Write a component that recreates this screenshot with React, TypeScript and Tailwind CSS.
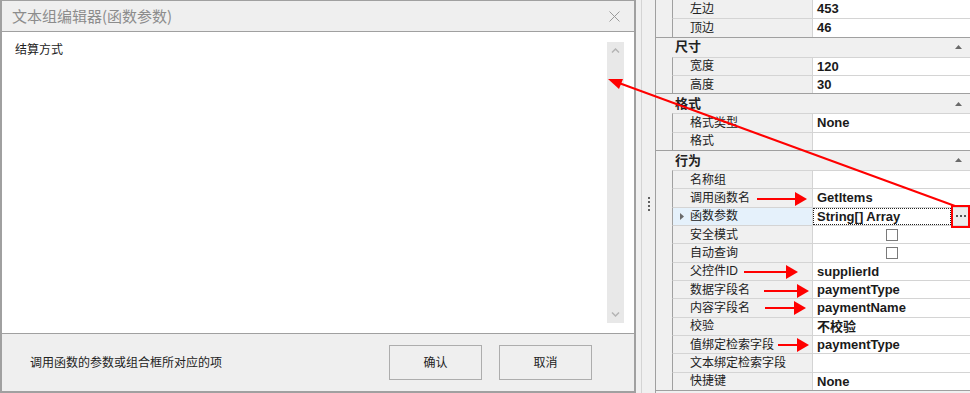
import React from "react";

type Item =
	| { kind: "cat"; name: string }
	| { kind: "row"; name: string; value?: string; check?: boolean; selected?: boolean; first?: boolean };

const items: Item[] = [
	{ kind: "row", name: "左边", value: "453", first: true },
	{ kind: "row", name: "顶边", value: "46" },
	{ kind: "cat", name: "尺寸" },
	{ kind: "row", name: "宽度", value: "120" },
	{ kind: "row", name: "高度", value: "30" },
	{ kind: "cat", name: "格式" },
	{ kind: "row", name: "格式类型", value: "None" },
	{ kind: "row", name: "格式" },
	{ kind: "cat", name: "行为" },
	{ kind: "row", name: "名称组" },
	{ kind: "row", name: "调用函数名", value: "GetItems" },
	{ kind: "row", name: "函数参数", value: "String[] Array", selected: true },
	{ kind: "row", name: "安全模式", check: true },
	{ kind: "row", name: "自动查询", check: true },
	{ kind: "row", name: "父控件ID", value: "supplierId" },
	{ kind: "row", name: "数据字段名", value: "paymentType" },
	{ kind: "row", name: "内容字段名", value: "paymentName" },
	{ kind: "row", name: "校验", value: "不校验" },
	{ kind: "row", name: "值绑定检索字段", value: "paymentType" },
	{ kind: "row", name: "文本绑定检索字段" },
	{ kind: "row", name: "快捷键", value: "None" },
];

const Category: React.FC<{ name: string }> = ({ name }) => (
	<div className="h-[20px] flex items-center border-t border-[#a0a0a0] bg-[#f0f0f0] pl-[19px] pr-[8px]">
		<span className="flex-1 font-bold text-[13px] text-[#222]">{name}</span>
		<svg width="7" height="4" viewBox="0 0 7 4">
			<polygon points="3.5,0 7,4 0,4" fill="#6a6a6a" />
		</svg>
	</div>
);

const Row: React.FC<{ item: Extract<Item, { kind: "row" }> }> = ({ item }) => (
	<div className="h-[18.33px] flex">
		<div className="w-[16px] shrink-0 bg-[#f0f0f0]" />
		<div
			className={`flex-1 flex border-l border-[#a0a0a0] ${item.first ? "" : "border-t border-t-[#d4d4d4]"}`}
		>
			<div
				className={`w-[140px] shrink-0 flex items-center border-r border-[#d4d4d4] ${
					item.selected ? "bg-[#e5f1fb]" : "bg-[#f0f0f0]"
				}`}
			>
				<div className="w-[17px] flex justify-center">
					{item.selected && (
						<svg width="4" height="7" viewBox="0 0 4 7">
							<polygon points="0,0 4,3.5 0,7" fill="#6a6a6a" />
						</svg>
					)}
				</div>
				<span className="text-[12px] text-[#222] whitespace-nowrap">{item.name}</span>
			</div>
			<div className="flex-1 flex items-center bg-white min-w-0">
				{item.check ? (
					<div className="flex-1 flex justify-center">
						<div className="w-[12px] h-[12px] border border-[#7a7a7a] bg-white" />
					</div>
				) : item.selected ? (
					<div className="flex-1 flex items-center h-full pr-[2px]">
						<div className="flex-1 h-[17px] flex items-center border border-dotted border-[#222] pl-[3px]">
							<span className="font-bold text-[13px] text-[#1a1a1a] whitespace-nowrap">{item.value}</span>
						</div>
						<div className="w-[15px] h-[17px] ml-[2px] bg-[#ececec] flex items-center justify-center gap-[2px]">
							<span className="w-[2px] h-[2px] bg-[#555]" />
							<span className="w-[2px] h-[2px] bg-[#555]" />
							<span className="w-[2px] h-[2px] bg-[#555]" />
						</div>
					</div>
				) : (
					<span className="pl-[4px] font-bold text-[13px] text-[#1a1a1a] whitespace-nowrap">{item.value}</span>
				)}
			</div>
		</div>
	</div>
);

const Arrow: React.FC<{ x1: number; x2: number; y: number }> = ({ x1, x2, y }) => (
	<g>
		<line x1={x1} y1={y} x2={x2 - 10} y2={y} stroke="#ff0000" strokeWidth="2" />
		<polygon points={`${x2 - 12},${y - 7} ${x2},${y} ${x2 - 12},${y + 7}`} fill="#ff0000" />
	</g>
);

const App: React.FC = (): JSX.Element => {
	return (
		<div className="relative w-[970px] h-[393px] overflow-hidden flex bg-[#f0f0f0] font-['Liberation_Sans','Noto_Sans_CJK_SC',sans-serif] text-[12px]">
			{/* dialog */}
			<div className="w-[636px] h-[393px] shrink-0 flex flex-col border-l-2 border-r-2 border-t border-b-2 border-[#a0a0a0]">
				<div className="h-[31px] shrink-0 flex items-center justify-between bg-[#efefef] border-b border-[#a0a0a0] pl-[10px] pr-[14px]">
					<span className="text-[15px] text-[#8c8c8c] font-['Noto_Sans_CJK_SC',sans-serif]">文本组编辑器(函数参数)</span>
					<svg width="11" height="11" viewBox="0 0 11 11">
						<path d="M0.5 0.5 L10.5 10.5 M10.5 0.5 L0.5 10.5" stroke="#9a9a9a" strokeWidth="1" />
					</svg>
				</div>
				<div className="flex-1 flex bg-white p-[10px]">
					<div className="flex-1 pl-[3px] text-[12px] leading-[16px] text-[#222]">结算方式</div>
					<div className="w-[17px] bg-[#e8e8e8] flex flex-col items-center justify-between py-[6px]">
						<svg width="9" height="5" viewBox="0 0 9 5">
							<path d="M1 4.5 L4.5 1 L8 4.5" stroke="#b4b4b4" strokeWidth="1.5" fill="none" />
						</svg>
						<svg width="9" height="5" viewBox="0 0 9 5">
							<path d="M1 0.5 L4.5 4 L8 0.5" stroke="#b4b4b4" strokeWidth="1.5" fill="none" />
						</svg>
					</div>
				</div>
				<div className="h-[58px] shrink-0 border-t border-[#a0a0a0] bg-[#efefef] pt-[11px] pl-[28px] pr-[42px]">
					<div className="h-[35px] flex items-center">
						<span className="flex-1 text-[12px] text-[#222]">调用函数的参数或组合框所对应的项</span>
						<button className="w-[93px] h-[35px] border border-[#adadad] bg-[#efefef] text-[12px] text-[#222]">确认</button>
						<button className="w-[93px] h-[35px] ml-[17px] border border-[#adadad] bg-[#efefef] text-[12px] text-[#222]">取消</button>
					</div>
				</div>
			</div>

			{/* splitter */}
			<div className="w-[20px] shrink-0 flex">
				<div className="w-[5px]" />
				<div className="w-px bg-[#d4d4d4]" />
				<div className="w-[13px] flex flex-col items-center pt-[197px] gap-[2px]">
					<span className="w-[2px] h-[2px] bg-[#606060]" />
					<span className="w-[2px] h-[2px] bg-[#606060]" />
					<span className="w-[2px] h-[2px] bg-[#606060]" />
					<span className="w-[2px] h-[2px] bg-[#606060]" />
				</div>
				<div className="w-px bg-[#a0a0a0]" />
			</div>

			{/* property grid */}
			<div className="flex-1 flex flex-col">
				{items.map((it, i) =>
					it.kind === "cat" ? <Category key={i} name={it.name} /> : <Row key={i} item={it} />
				)}
				<div className="border-t border-[#a0a0a0]" />
			</div>

			{/* annotations */}
			<svg className="absolute inset-0 pointer-events-none" width="970" height="393" viewBox="0 0 970 393">
				<line x1="955" y1="206" x2="619" y2="83" stroke="#ff0000" strokeWidth="2" />
				<polygon points="608,79 623,79 619,89" fill="#ff0000" />
				<rect x="952" y="206" width="17" height="21" fill="none" stroke="#ff0000" strokeWidth="2" />
				<Arrow x1={757} x2={807} y={199} />
				<Arrow x1={744} x2={798} y={272} />
				<Arrow x1={764} x2={809} y={291} />
				<Arrow x1={765} x2={806} y={308} />
				<Arrow x1={778} x2={809} y={345} />
			</svg>
		</div>
	);
};

export default App;
